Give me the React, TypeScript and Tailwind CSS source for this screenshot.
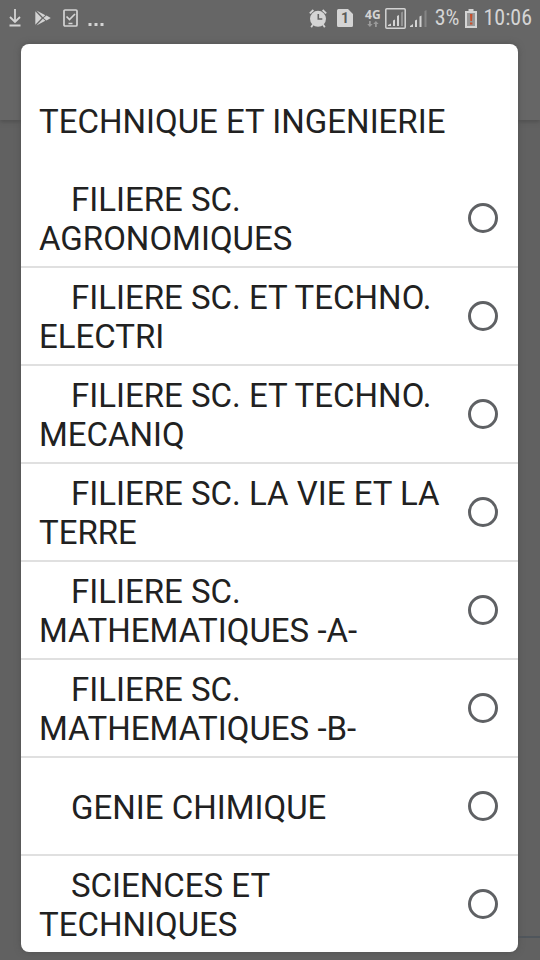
type Option = {
  id: string;
  label: string;
};

const OPTIONS: Option[] = [
  { id: "agro", label: "FILIERE SC. AGRONOMIQUES" },
  { id: "electri", label: "FILIERE SC. ET TECHNO. ELECTRI" },
  { id: "mecaniq", label: "FILIERE SC. ET TECHNO. MECANIQ" },
  { id: "svt", label: "FILIERE SC. LA VIE ET LA TERRE" },
  { id: "math-a", label: "FILIERE SC. MATHEMATIQUES -A-" },
  { id: "math-b", label: "FILIERE SC. MATHEMATIQUES -B-" },
  { id: "chimie", label: "GENIE CHIMIQUE" },
  { id: "st", label: "SCIENCES ET TECHNIQUES" }
];

function DownloadIcon() {
  return (
    <svg width="12" height="18" viewBox="0 0 12 18" fill="none" stroke="currentColor" strokeWidth="1.8">
      <path d="M6 0v13M1 8l5 5 5-5M0.5 16.5h11" />
    </svg>
  );
}

function PlayIcon() {
  return (
    <svg width="16" height="16" viewBox="0 0 17 16" fill="currentColor">
      <path d="M0.3 0.8v14.4L7.2 8z" />
      <path d="M1.6 0 11 5.2 8.4 7.3zM1.6 16 11 10.8 8.4 8.7zM9 8l3.2-2.6L16.8 8l-4.6 2.6z" />
    </svg>
  );
}

function DeviceCheckIcon() {
  return (
    <svg width="15" height="18" viewBox="0 0 15 18" fill="none" stroke="currentColor" strokeWidth="1.7">
      <rect x="1" y="1" width="13" height="16" rx="1" />
      <path d="M3.5 7.5 6.5 10.5 12 5M5.5 14.5h4" />
    </svg>
  );
}

function AlarmIcon() {
  return (
    <svg width="18" height="19" viewBox="0 0 18 19" fill="none" stroke="currentColor">
      <circle cx="9" cy="9.8" r="8" fill="currentColor" stroke="none" />
      <path d="M0.8 4.4 4.4 1M17.2 4.4 13.6 1M4 15.5 2.2 18.2M14 15.5l1.8 2.7" strokeWidth="1.8" />
      <path d="M9.3 5v5h4" stroke="#646464" strokeWidth="1.6" />
    </svg>
  );
}

function SimIcon() {
  return (
    <span className="relative flex h-[18px] w-4 items-center justify-center">
      <svg className="absolute inset-0" width="16" height="18" viewBox="0 0 16 18" fill="currentColor">
        <path d="M1.5 0H11l5 5v11.5a1.5 1.5 0 0 1-1.5 1.5h-13A1.5 1.5 0 0 1 0 16.5v-15A1.5 1.5 0 0 1 1.5 0z" />
      </svg>
      <span className="relative font-[Roboto,sans-serif] text-sm leading-none font-bold text-[#5c5c5c]">1</span>
    </span>
  );
}

function NetworkIcon() {
  return (
    <span className="flex flex-col items-center">
      <span className="font-['Open_Sans',sans-serif] text-xs leading-3 font-bold">4G</span>
      <svg width="12" height="6" viewBox="0 0 12 6" fill="#9a9a9a">
        <path d="M2 0h1.8v3h1.8L2.9 6 .2 3H2zM8 6h1.8V3h1.8L8.9 0 6.2 3H8z" />
      </svg>
    </span>
  );
}

function BoxedSignalIcon() {
  return (
    <svg width="21" height="21" viewBox="0 0 21 21">
      <rect x="0.8" y="0.8" width="19.4" height="19.4" rx="1" fill="none" stroke="currentColor" strokeWidth="1.5" />
      <path d="M3 18v-1l3-1.5V18zM8 12.5l2-1V18H8zM12 8l2-1v11h-2z" fill="currentColor" />
      <path d="M16 4.5l2-1V18h-2z" fill="#929292" />
    </svg>
  );
}

function SignalIcon() {
  return (
    <svg width="17" height="17" viewBox="0 0 17 17">
      <path d="M0 17v-1l3-2v3zM5 10.5l2-1V17H5zM9.5 6.5l2-1V17h-2z" fill="currentColor" />
      <path d="M14.5 1l2-1v17h-2z" fill="#858585" />
    </svg>
  );
}

function BatteryIcon() {
  return (
    <svg width="12" height="19" viewBox="0 0 12 19">
      <path d="M3.5 0h5v2H12v17H0V2h3.5z" fill="currentColor" />
      <path d="M2 4h8v13H2z" fill="#969696" />
      <path d="M5 5h2.4L7 12H5.4zM5 13.5h2.4v2H5z" fill="#c94f2c" />
    </svg>
  );
}

function StatusBar() {
  return (
    <header className="flex h-9 items-center justify-between pr-2 pl-[9px] font-['Roboto_Condensed','Liberation_Sans_Narrow',Roboto,sans-serif] text-[#d4d4d4]">
      <div className="flex items-center">
        <DownloadIcon />
        <span className="ml-3.5">
          <PlayIcon />
        </span>
        <span className="ml-3">
          <DeviceCheckIcon />
        </span>
        <svg width="16" height="18" viewBox="0 0 16 18" fill="currentColor" className="ml-2.5">
          <path d="M0.5 14h3v3h-3zM6.5 14h3v3h-3zM12.5 14h3v3h-3z" />
        </svg>
      </div>
      <div className="flex items-center">
        <AlarmIcon />
        <span className="ml-2.5">
          <SimIcon />
        </span>
        <span className="ml-3">
          <NetworkIcon />
        </span>
        <span className="ml-1">
          <BoxedSignalIcon />
        </span>
        <span className="ml-1">
          <SignalIcon />
        </span>
        <span className="ml-2 text-[22px] leading-none">3%</span>
        <span className="ml-1.5">
          <BatteryIcon />
        </span>
        <time className="ml-1.5 text-[22px] leading-none">10:06</time>
      </div>
    </header>
  );
}

function OptionRow({ id, label }: Option) {
  return (
    <label
      htmlFor={id}
      className="flex min-h-[98px] items-center justify-between border-b-2 border-[#e0e0e0] pr-5 pl-[18px] last:min-h-24 last:border-b-0"
    >
      <span className="flex-1 pt-0.5 pr-5 indent-8">{label}</span>
      <input
        id={id}
        type="radio"
        name="filiere"
        className="size-[30px] shrink-0 appearance-none rounded-full border-3 border-[#5f6164] checked:border-8"
      />
    </label>
  );
}

export default function App() {
  return (
    <div className="grid min-h-screen bg-[#616161] font-[Roboto,sans-serif]">
      <div aria-hidden="true" className="col-start-1 row-start-1 flex flex-col">
        <div className="h-[120px] bg-[#666666] shadow-[0_2px_4px_#505050]" />
        <div className="flex-1" />
        <div className="ml-6 h-6 border-t-2 border-[#50565c]" />
      </div>
      <div className="relative col-start-1 row-start-1 flex flex-col">
        <StatusBar />
        <main
          role="dialog"
          aria-labelledby="dialog-title"
          className="mt-2 mr-[22px] mb-2 ml-[21px] rounded-lg bg-white pt-7 text-[33px] leading-[39px] text-[#212121] shadow-[0_0_6px_#505050]"
        >
          <fieldset>
            <legend id="dialog-title" className="flex min-h-[98px] items-center px-[18px]">
              TECHNIQUE ET INGENIERIE
            </legend>
            {OPTIONS.map((option) => (
              <OptionRow key={option.id} {...option} />
            ))}
          </fieldset>
        </main>
      </div>
    </div>
  );
}
